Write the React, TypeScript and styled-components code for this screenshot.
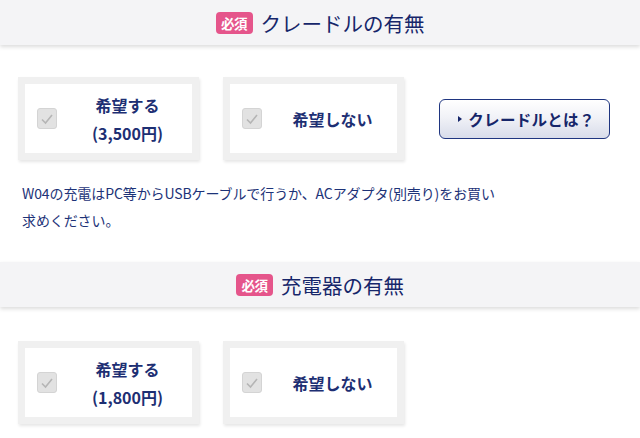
import React from "react";
import styled, { createGlobalStyle } from "styled-components";

const GlobalStyle = createGlobalStyle`
  html, body {
    margin: 0;
    padding: 0;
    background: #fff;
  }
  body {
    font-family: "Noto Sans CJK JP", "Noto Sans", sans-serif;
    color: #1d2f73;
  }
`;

type Option = { label: string; price?: string };

const Page = styled.div`
  width: 640px;
  height: 438px;
  overflow: hidden;
  background: #fff;
`;

const SectionHeader = styled.div`
  height: 45px;
  display: flex;
  align-items: center;
  justify-content: center;
  gap: 8px;
  background: #f4f4f6;
  box-shadow: 0 2px 4px rgba(0, 0, 0, 0.14);
  position: relative;
  z-index: 1;
`;

const Badge = styled.span`
  display: inline-flex;
  align-items: center;
  justify-content: center;
  width: 37px;
  height: 22px;
  border-radius: 4px;
  background: #e5558b;
  color: #fff;
  font-size: 13.5px;
  font-weight: 700;
  letter-spacing: -0.5px;
`;

const HeaderTitle = styled.h2`
  margin: 0;
  font-size: 20.5px;
  font-weight: 400;
  color: #16266a;
`;

const OptionRow = styled.div<{ $top: number }>`
  display: flex;
  align-items: center;
  gap: 24px;
  padding: 0 18px;
  margin-top: ${(p) => p.$top}px;
`;

const Card = styled.label`
  box-sizing: border-box;
  width: 181px;
  height: 83px;
  border: 7px solid #f0f0f0;
  background: #fff;
  box-shadow: 1px 2px 3px rgba(0, 0, 0, 0.1);
  display: flex;
  align-items: center;
  padding-left: 12px;
`;

const CheckBox = styled.span`
  box-sizing: border-box;
  flex: 0 0 20px;
  width: 20px;
  height: 21px;
  border-radius: 3px;
  border: 1px solid #d4d4d4;
  background: #e2e2e2;
  display: flex;
  align-items: center;
  justify-content: center;
`;

const CardLabel = styled.span`
  flex: 1;
  text-align: center;
  font-size: 16px;
  font-weight: 700;
  line-height: 28px;
  color: #1d2f73;
  padding-left: 6px;
`;

const InfoButton = styled.button`
  box-sizing: border-box;
  margin-left: 11px;
  width: 171px;
  height: 40px;
  border: 1px solid #1f3580;
  border-radius: 6px;
  background: linear-gradient(#ffffff, #f1f2f7 45%, #d8dcea);
  display: flex;
  align-items: center;
  justify-content: center;
  gap: 6px;
  font-family: "Noto Sans CJK JP", "Noto Sans", sans-serif;
  font-size: 15.5px;
  font-weight: 700;
  color: #16266a;
  letter-spacing: 0.3px;
  padding: 0 0 0 4px;
`;

const Arrow = styled.span`
  width: 0;
  height: 0;
  border-top: 3px solid transparent;
  border-bottom: 3px solid transparent;
  border-left: 4px solid #16266a;
`;

const Note = styled.p`
  margin: 20px 0 28px 22px;
  font-size: 14px;
  line-height: 27px;
  letter-spacing: -0.1px;
  color: #1d3378;
`;

const Check = () => (
  <svg width="14" height="12" viewBox="0 0 14 12">
    <path d="M2 6.5 L5.5 10 L12 2" fill="none" stroke="#b5b5b5" strokeWidth="1.6" />
  </svg>
);

const OptionCard = ({ label, price }: Option) => (
  <Card>
    <CheckBox>
      <Check />
    </CheckBox>
    <CardLabel>
      {label}
      {price && (
        <>
          <br />
          {price}
        </>
      )}
    </CardLabel>
  </Card>
);

export default function App() {
  return (
    <Page>
      <GlobalStyle />
      <SectionHeader>
        <Badge>必須</Badge>
        <HeaderTitle>クレードルの有無</HeaderTitle>
      </SectionHeader>
      <OptionRow $top={32}>
        <OptionCard label="希望する" price="(3,500円)" />
        <OptionCard label="希望しない" />
        <InfoButton>
          <Arrow />
          クレードルとは？
        </InfoButton>
      </OptionRow>
      <Note>
        W04の充電はPC等からUSBケーブルで行うか、ACアダプタ(別売り)をお買い
        <br />
        求めください。
      </Note>
      <SectionHeader>
        <Badge>必須</Badge>
        <HeaderTitle>充電器の有無</HeaderTitle>
      </SectionHeader>
      <OptionRow $top={34}>
        <OptionCard label="希望する" price="(1,800円)" />
        <OptionCard label="希望しない" />
      </OptionRow>
    </Page>
  );
}
